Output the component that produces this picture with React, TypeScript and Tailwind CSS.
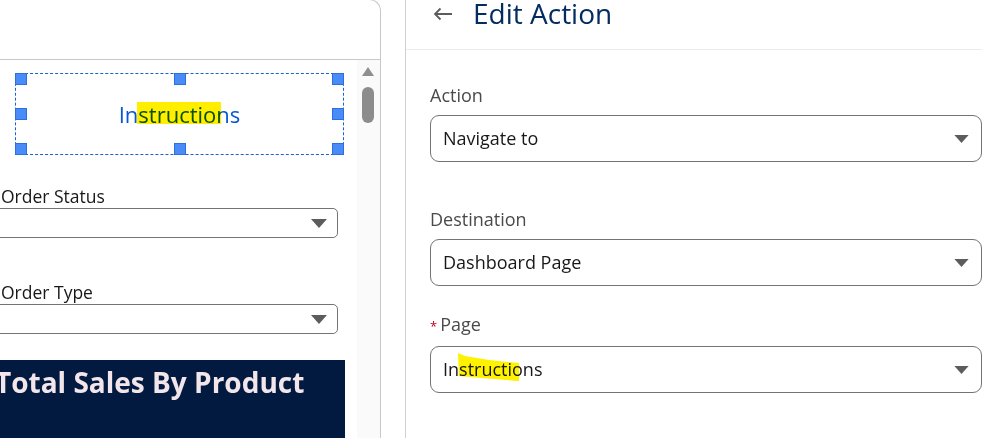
import React from 'react';

const font = "font-['Open_Sans','Noto_Sans',sans-serif]";

// filled dropdown caret
const Caret = ({ w = 15, h = 8 }: { w?: number; h?: number }) => (
  <svg width={w} height={h} viewBox="0 0 16 9" className="shrink-0">
    <path d="M0 0 H16 L8 9 Z" fill="#5c5c5c" />
  </svg>
);

const Handle = () => (
  <div className="w-[12px] h-[12px] bg-[#4a8cf7] border border-[#2e6fe0]" />
);

const LeftSelect = ({ label }: { label: string }) => (
  <div className="flex flex-col">
    <div className="pl-[1px] text-[17.5px] leading-[22px] text-[#181818]">{label}</div>
    <div className="-ml-4 mt-[1px] w-[354px] h-[30px] border border-[#747474] rounded-[5px] flex items-center justify-end pr-[10px]">
      <Caret w={16} h={9} />
    </div>
  </div>
);

const Field = ({
  label,
  value,
  required,
  highlight,
}: {
  label: string;
  value: string;
  required?: boolean;
  highlight?: boolean;
}) => (
  <div className="flex flex-col">
    <div className="text-[18px] leading-[24px] text-[#4a4a4a] flex items-baseline">
      {required && <span className="text-[#ba0517] text-[13px] mr-[3px]">*</span>}
      {label}
    </div>
    <div className="relative mt-[8px] h-[47px] w-[552px] border border-[#747474] rounded-[9px] flex items-center pl-[12px] pr-[12px]">
      <span className="text-[18px] text-[#181818] flex-1">{value}</span>
      {highlight && (
        <svg
          className="absolute left-0 top-0 mix-blend-multiply pointer-events-none"
          width="100"
          height="47"
        >
          <path
            d="M27 6 L34 9 Q60 14 88 16 L88 34 Q60 32 28 29 Z"
            fill="#fff200"
          />
        </svg>
      )}
      <Caret />
    </div>
  </div>
);

export default function App() {
  return (
    <div className={`${font} w-[982px] h-[438px] bg-white flex overflow-hidden`}>
      {/* Left canvas panel */}
      <div className="-mt-px w-[381px] h-[439px] shrink-0 border-t border-r border-[#c9c9c9] rounded-tr-[12px] flex flex-col overflow-hidden">
        <div className="h-[60px] shrink-0 border-b border-[#c9c9c9]" />
        <div className="flex-1 flex min-h-0">
          <div className="relative flex-1 flex flex-col overflow-hidden">
            {/* selected component */}
            <div className="relative mt-[13px] ml-[15px] w-[329px] h-[82px] border border-dashed border-[#1b5fd9] flex items-center justify-center">
              <span className="relative text-[22px] text-[#0a55d4]">
                Instructions
                <span className="absolute left-[18px] top-[4px] w-[84px] h-[22px] bg-[#ffee00] mix-blend-multiply" />
              </span>
              <div className="absolute inset-[-1px] flex flex-col justify-between">
                <div className="flex justify-between"><Handle /><Handle /><Handle /></div>
                <div className="flex justify-between"><Handle /><Handle /></div>
                <div className="flex justify-between"><Handle /><Handle /><Handle /></div>
              </div>
            </div>

            <div className="mt-[30px]">
              <LeftSelect label="Order Status" />
            </div>
            <div className="mt-[43px]">
              <LeftSelect label="Order Type" />
            </div>

            <div className="mt-[26px] w-[345px] flex-1 bg-[#021a3f] pt-[4px]">
              <div className="-ml-[5px] text-[28px] font-bold text-[#f3e6ea] whitespace-nowrap leading-[36px]">
                Total Sales By Product
              </div>
            </div>
          </div>
          {/* scrollbar */}
          <div className="w-[23px] shrink-0 bg-[#fafafa] flex flex-col items-center pt-[7px] pr-[1px]">
            <svg width="12" height="9" viewBox="0 0 12 9">
              <path d="M6 0 L12 9 H0 Z" fill="#8f8f8f" />
            </svg>
            <div className="mt-[11px] w-[12px] h-[36px] rounded-full bg-[#8c8c8c]" />
          </div>
        </div>
      </div>

      <div className="w-[24px] shrink-0" />

      {/* Right edit panel */}
      <div className="flex-1 border-l border-[#d0d0d0] flex flex-col">
        <div className="h-[55px] shrink-0 border-b border-[#ececec] flex items-start pl-[27px] -mt-[5px]">
          <div className="flex items-center h-[36px]">
            <svg width="20" height="14" viewBox="0 0 20 14" className="mt-[1px]">
              <path
                d="M19 7 H2 M7.5 1.5 L2 7 L7.5 12.5"
                fill="none"
                stroke="#5c5c5c"
                strokeWidth="1.8"
              />
            </svg>
            <span className="ml-[20px] text-[28px] leading-[36px] text-[#032d60]">Edit Action</span>
          </div>
        </div>

        <div className="pl-[24px] pt-[33px] flex flex-col">
          <Field label="Action" value="Navigate to" />
          <div className="mt-[45px]">
            <Field label="Destination" value="Dashboard Page" />
          </div>
          <div className="mt-[26px]">
            <Field label="Page" value="Instructions" required highlight />
          </div>
        </div>
      </div>
    </div>
  );
}
